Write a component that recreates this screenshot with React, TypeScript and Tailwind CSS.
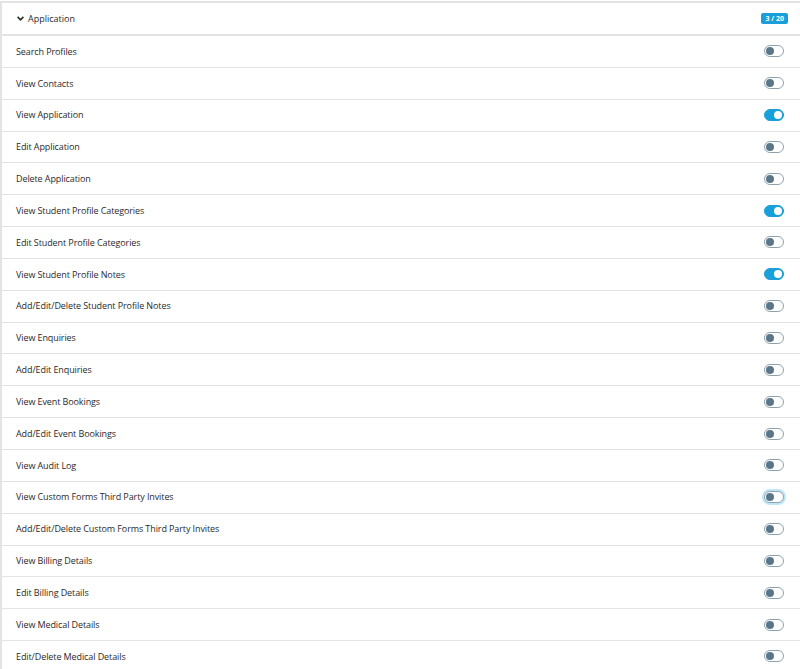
import React from 'react';

const perms: { label: string; on?: boolean; focus?: boolean }[] = [
  { label: 'Search Profiles' },
  { label: 'View Contacts' },
  { label: 'View Application', on: true },
  { label: 'Edit Application' },
  { label: 'Delete Application' },
  { label: 'View Student Profile Categories', on: true },
  { label: 'Edit Student Profile Categories' },
  { label: 'View Student Profile Notes', on: true },
  { label: 'Add/Edit/Delete Student Profile Notes' },
  { label: 'View Enquiries' },
  { label: 'Add/Edit Enquiries' },
  { label: 'View Event Bookings' },
  { label: 'Add/Edit Event Bookings' },
  { label: 'View Audit Log' },
  { label: 'View Custom Forms Third Party Invites', focus: true },
  { label: 'Add/Edit/Delete Custom Forms Third Party Invites' },
  { label: 'View Billing Details' },
  { label: 'Edit Billing Details' },
  { label: 'View Medical Details' },
  { label: 'Edit/Delete Medical Details' },
];

const Toggle: React.FC<{ on?: boolean; focus?: boolean }> = ({ on, focus }) => (
  <span
    className={
      'flex items-center w-[20px] h-[12px] rounded-full border px-[1px] ' +
      (on ? 'bg-[#1b9fd8] border-[#1b9fd8] justify-end' : 'bg-white border-[#8ea3b0] justify-start') +
      (focus ? ' shadow-[0_0_0_2px_#bfe5f7]' : '')
    }
  >
    <span className={'w-[8px] h-[8px] rounded-full ' + (on ? 'bg-white' : 'bg-[#5b7689]')} />
  </span>
);

export default function App() {
  return (
    <div className="w-[800px] h-[669px] bg-white overflow-hidden pt-[1px]" style={{ fontFamily: '"Open Sans", sans-serif' }}>
      <div className="border-l-2 border-t-2 border-[#e3e3e3]">
        <div className="flex items-center justify-between h-[33px] border-b-2 border-[#e3e3e3] pl-[14px] pr-[12px]">
          <div className="flex items-center gap-[3px] text-[9px] text-[#2a2a2a]">
            <svg width="9" height="9" viewBox="0 0 10 10">
              <path d="M1.8 3.2 L5 6.4 L8.2 3.2" fill="none" stroke="#2a2a2a" strokeWidth="1.8" />
            </svg>
            <span>Application</span>
          </div>
          <span className="bg-[#1b9fd8] text-white text-[7px] font-bold leading-none rounded-[2px] px-[4px] py-[2px]">3 / 20</span>
        </div>
        {perms.map((p) => (
          <div key={p.label} className="flex items-center justify-between h-[31.85px] border-b border-[#e3e3e3] pl-[14px] pr-[16px]">
            <span className="text-[9px] text-[#2a2a2a] tracking-[-0.1px]">{p.label}</span>
            <Toggle on={p.on} focus={p.focus} />
          </div>
        ))}
      </div>
    </div>
  );
}
